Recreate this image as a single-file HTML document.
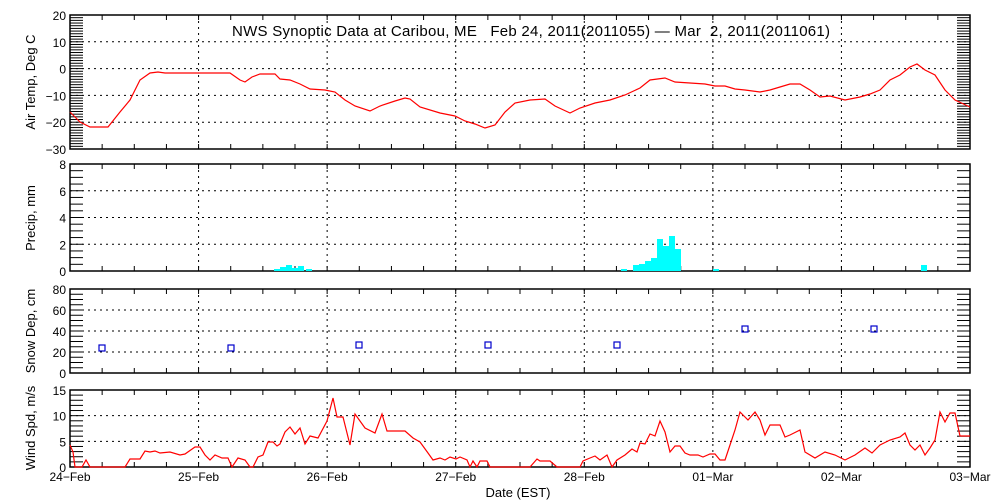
<!DOCTYPE html>
<html><head><meta charset="utf-8"><style>
html,body{margin:0;padding:0;background:#fff;width:1000px;height:500px;overflow:hidden}
svg text{font-family:"Liberation Sans",sans-serif;fill:#000}
</style></head><body>
<svg id="s" width="1000" height="500" xmlns="http://www.w3.org/2000/svg">
<text x="232" y="36" font-size="15" textLength="598" lengthAdjust="spacing" style="white-space:pre" xml:space="preserve">NWS Synoptic Data at Caribou, ME   Feb 24, 2011(2011055) — Mar  2, 2011(2011061)</text>
<text x="35" y="82" font-size="13" text-anchor="middle" transform="rotate(-90 35 82)">Air Temp, Deg C</text>
<text x="35" y="218" font-size="13" text-anchor="middle" transform="rotate(-90 35 218)">Precip, mm</text>
<text x="35" y="331" font-size="13" text-anchor="middle" transform="rotate(-90 35 331)">Snow Dep, cm</text>
<text x="35" y="428" font-size="13" text-anchor="middle" transform="rotate(-90 35 428)">Wind Spd, m/s</text>
<text x="518" y="497" font-size="13" text-anchor="middle">Date (EST)</text>
<g id="g"></g>
</svg>
<script>
var g=document.getElementById('g'),h='';
var L=70,R=970,D=(R-L)/7;
function ln(x1,y1,x2,y2,st){h+='<line x1="'+x1+'" y1="'+y1+'" x2="'+x2+'" y2="'+y2+'" '+(st||'stroke="#000"')+'/>';}
function tx(x,y,t,a){h+='<text x="'+x+'" y="'+y+'" font-size="12" text-anchor="'+(a||'end')+'">'+t+'</text>';}
var P=[
 {t:15,b:149,min:-30,max:20,maj:10,mn:1,labs:[20,10,0,-10,-20,-30]},
 {t:164,b:271,min:0,max:8,maj:2,mn:0.5,labs:[8,6,4,2,0]},
 {t:289,b:373,min:0,max:80,maj:20,mn:5,labs:[80,60,40,20,0]},
 {t:390,b:467,min:0,max:15,maj:5,mn:1,labs:[15,10,5,0]}];
var dot='stroke="#000" stroke-dasharray="2,4"';
P.forEach(function(p,i){
 function Y(v){return p.b-(v-p.min)/(p.max-p.min)*(p.b-p.t);}
 p.Y=Y;
 for(var v=p.min+p.maj;v<p.max-0.001;v+=p.maj) ln(L,Y(v),R,Y(v),dot);
 for(var d=1;d<7;d++) ln(L+d*D,p.t,L+d*D,p.b,dot);
 for(var v=p.min;v<=p.max+0.001;v+=p.mn){ln(L,Y(v),L+13,Y(v));ln(R-13,Y(v),R,Y(v));}
 for(var q=1;q<28;q++){var x=L+q*D/4;ln(x,p.t,x,p.t+5);ln(x,p.b,x,p.b-5);}
 h+='<rect x="'+L+'" y="'+p.t+'" width="'+(R-L)+'" height="'+(p.b-p.t)+'" fill="none" stroke="#000" stroke-width="1.5"/>';
 p.labs.forEach(function(v){tx(66,Y(v)+5,(v<0?'\u2212'+(-v):v));});
});
var dl=['24\u2212Feb','25\u2212Feb','26\u2212Feb','27\u2212Feb','28\u2212Feb','01\u2212Mar','02\u2212Mar','03\u2212Mar'];
dl.forEach(function(t,i){tx(L+i*D,481,t,'middle');});
function pl(pts,c){h+='<polyline fill="none" stroke="'+c+'" stroke-width="1.2" points="'+pts+'"/>';}
pl("70,112 80,122 90,127 108,127 120,112 130,100 140,80 150,73 158,72 165,73 230,73 240,80 245,82 252,77 260,74 275,74 280,79 290,80 300,84 310,89 325,90 335,92 345,100 355,106 370,111 380,106 395,101 405,98 410,99 420,107 440,113 455,116 465,121 475,124 485,128 495,125 505,112 515,103 530,100 545,99 555,106 570,113 580,108 595,103 610,100 625,95 640,88 650,80 665,78 675,82 690,83 705,84 715,86 725,86 735,89 745,90 760,92 770,90 780,87 790,84 800,84 810,90 820,97 830,96 845,100 860,97 870,94 880,90 890,80 900,75 910,67 917,64 925,70 935,75 945,90 955,100 970,107","#f00");
var bars=[[274,1],[280,3],[286,5],[292,2],[298,4],[306,1],[621,1],[633,5],[639,6],[645,9],[651,12],[657,31],[663,24],[669,34],[675,21],[713,1],[921,5]];
bars.forEach(function(b){h+='<rect x="'+b[0]+'" y="'+(271-b[1]-1)+'" width="6" height="'+(b[1]+1)+'" fill="#0ff"/>';});
[[102,348],[231,348],[359,345],[488,345],[617,345],[745,329],[874,329]].forEach(function(s){h+='<rect x="'+(s[0]-3)+'" y="'+(s[1]-3)+'" width="6" height="6" fill="none" stroke="#00c" stroke-width="1.2"/>';});
pl("70,445 73,452 75,467 82,467 86,460 90,467 125,467 130,459 140,459 145,451 150,452 155,451 160,453 170,452 180,455 185,454 195,447 200,447 205,455 210,460 215,455 222,458 228,458 232,467 238,458 245,460 250,467 253,467 258,457 263,455 268,442 273,442 277,446 280,444 285,432 290,427 295,434 300,428 305,444 310,436 318,438 327,421 333,398 337,417 343,417 350,445 355,414 365,428 375,433 382,414 387,431 397,431 405,431 413,438 420,442 428,453 433,460 440,458 445,460 450,457 456,459 460,457 467,460 470,467 473,461 477,467 480,461 487,461 490,467 530,467 537,459 540,461 550,461 557,467 580,467 583,461 590,458 595,456 600,460 607,455 612,467 617,460 625,455 632,449 637,452 640,443 645,444 650,434 655,436 660,421 665,432 670,452 675,446 680,446 685,453 690,455 698,455 703,457 710,454 715,454 720,460 725,460 730,445 735,430 740,412 748,420 755,412 760,420 765,435 770,425 780,425 785,437 790,435 800,430 805,452 815,458 825,452 835,455 845,460 855,455 865,448 872,453 880,445 890,440 900,437 905,433 910,445 915,450 920,445 925,455 930,448 935,440 940,412 945,422 950,413 955,413 960,436 970,436","#f00");
g.innerHTML=h;
</script>
</body></html>
